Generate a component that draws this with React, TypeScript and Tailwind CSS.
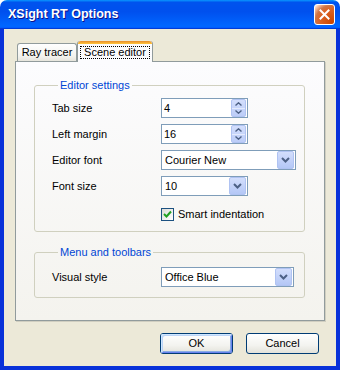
import React from 'react';

// ─── Small pieces ────────────────────────────────────────────────────────────

function SpinBox({ value }: { value: string }) {
  return (
    <div className="flex h-[20px] w-[87px] items-center border border-[#7f9db9] bg-white pl-[2px] pr-px">
      <span className="flex-1 leading-none">{value}</span>
      <div className="flex h-[18px] w-[15px] flex-col rounded-[2px] border border-[#b0c3f2] bg-[linear-gradient(#d3defc,#bccdf8)]">
        <div className="flex flex-1 items-center justify-center">
          <svg width="7" height="4" viewBox="0 0 7 4">
            <path d="M0.5 3.5 L3.5 0.8 L6.5 3.5" fill="none" stroke="#4d6185" strokeWidth="1.4" />
          </svg>
        </div>
        <div className="h-px bg-[#e4ebfd]" />
        <div className="flex flex-1 items-center justify-center">
          <svg width="7" height="4" viewBox="0 0 7 4">
            <path d="M0.5 0.5 L3.5 3.2 L6.5 0.5" fill="none" stroke="#4d6185" strokeWidth="1.4" />
          </svg>
        </div>
      </div>
    </div>
  );
}

function ComboBox({ value, width }: { value: string; width: string }) {
  return (
    <div className={`flex h-[20px] items-center border border-[#7f9db9] bg-white pl-[3px] pr-px ${width}`}>
      <span className="flex-1 leading-none">{value}</span>
      <div className="flex h-[18px] w-[17px] items-center justify-center rounded-[2px] border border-[#b0c3f2] bg-[linear-gradient(#d3defc,#b4c7f6)]">
        <svg width="9" height="6" viewBox="0 0 9 6">
          <path d="M1 1 L4.5 4.5 L8 1" fill="none" stroke="#4d6185" strokeWidth="2" />
        </svg>
      </div>
    </div>
  );
}

function Row({ label, children }: { label: string; children: React.ReactNode }) {
  return (
    <div className="flex h-[20px] items-center">
      <span className="w-[109px]">{label}</span>
      {children}
    </div>
  );
}

function GroupBox({ title, children, className = '' }: { title: string; children: React.ReactNode; className?: string }) {
  return (
    <fieldset className={`rounded-[3px] border border-[#d0d0bf] pl-[17px] ${className}`}>
      <legend className="ml-[6px] px-[2px] text-[11px] leading-[13px] text-[#0046d5]">{title}</legend>
      {children}
    </fieldset>
  );
}

function XpButton({ label, isDefault = false }: { label: string; isDefault?: boolean }) {
  return (
    <button
      type="button"
      className="flex h-[21px] w-[73px] items-center justify-center rounded-[3px] border border-[#003c74] bg-[linear-gradient(#ffffff,#f3f3ef_60%,#e3e2da)] p-0"
    >
      <span
        className={`flex h-full w-full items-center justify-center rounded-[2px] ${
          isDefault ? 'shadow-[inset_1px_1px_0_#cee7ff,inset_-1px_-1px_0_#6982ee,inset_2px_2px_0_#bcd4f6,inset_-2px_-2px_0_#89ade4]' : ''
        }`}
      >
        {label}
      </span>
    </button>
  );
}

// ─── Dialog ──────────────────────────────────────────────────────────────────

export default function App() {
  return (
    <div className="h-[370px] w-[340px] bg-white font-['Liberation_Sans',Arial,sans-serif] text-[11px] text-black">
      <div className="flex h-full w-full flex-col overflow-hidden rounded-t-[7px]">
        {/* Title bar */}
        <div className="flex h-[29px] shrink-0 items-center bg-[linear-gradient(180deg,#0997ff,#0053ee_8%,#0050ee_40%,#0066ff_88%,#0066ff_93%,#005bff_95%,#003dd7_96%,#003dd7)] pl-[8px] pr-[5px]">
          <span className="flex-1 text-[12.5px] font-bold text-white [text-shadow:1px_1px_0_#0f1089]">XSight RT Options</span>
          <div className="flex h-[21px] w-[21px] items-center justify-center rounded-[3px] border border-white bg-[radial-gradient(circle_at_90%_90%,#cc4600_0%,#dc6527_55%,#cd7546_70%,#ffccb2_90%,#fff_100%)]">
            <svg width="11" height="11" viewBox="0 0 11 11">
              <path d="M1.5 1.5 L9.5 9.5 M9.5 1.5 L1.5 9.5" stroke="#fff" strokeWidth="2" strokeLinecap="square" />
            </svg>
          </div>
        </div>

        {/* Client area */}
        <div className="flex flex-1 flex-col border-x-4 border-b-4 border-[#0831d9] bg-[#ece9d8] pl-[11px] pr-[11px] pt-[12px]">
          {/* Tabs */}
          <div className="flex h-[20px] items-end pl-[2px]">
            <div className="flex h-[18px] w-[60px] items-center justify-center rounded-t-[3px] border border-b-0 border-[#919b9c] bg-[linear-gradient(#ffffff,#f3f3ef_70%,#e6e5dc)]">
              Ray tracer
            </div>
            <div className="relative z-10 -mb-px flex h-[21px] w-[76px] flex-col rounded-t-[3px] border-x border-[#919b9c] bg-[#fcfcfe]">
              <div className="h-[3px] rounded-t-[3px] bg-[linear-gradient(#e68b2c,#ffc73c)]" />
              <div className="flex flex-1 items-start justify-center pt-[2px]">
                <span className="border border-dotted border-black px-[3px] leading-[11px]">Scene editor</span>
              </div>
            </div>
          </div>

          {/* Tab page */}
          <div className="flex h-[260px] flex-col border border-[#919b9c] bg-[linear-gradient(#fcfcfe,#f4f3ee)] pl-[18px] pr-[19px] pt-[17px] shadow-[1px_1px_0_#d0cec0]">
            <GroupBox title="Editor settings" className="pb-[7px] pt-[6px]">
              <div className="flex flex-col gap-[6px]">
                <Row label="Tab size">
                  <SpinBox value="4" />
                </Row>
                <Row label="Left margin">
                  <SpinBox value="16" />
                </Row>
                <Row label="Editor font">
                  <ComboBox value="Courier New" width="w-[135px]" />
                </Row>
                <Row label="Font size">
                  <ComboBox value="10" width="w-[87px]" />
                </Row>
                <div className="mt-[2px] flex h-[20px] items-center pl-[109px]">
                  <div className="flex h-[13px] w-[13px] items-center justify-center border border-[#1c5180] bg-[linear-gradient(135deg,#dcdcd7,#ffffff)]">
                    <svg width="9" height="9" viewBox="0 0 9 9">
                      <path d="M1 4 L3.5 6.5 L8 1.5" fill="none" stroke="#21a121" strokeWidth="2" />
                    </svg>
                  </div>
                  <span className="ml-[4px]">Smart indentation</span>
                </div>
              </div>
            </GroupBox>

            <GroupBox title="Menu and toolbars" className="mt-[14px] pb-[10px] pt-[8px]">
              <Row label="Visual style">
                <ComboBox value="Office Blue" width="w-[133px]" />
              </Row>
            </GroupBox>
          </div>

          {/* Buttons */}
          <div className="mt-[12px] flex justify-end gap-[13px] pr-[6px]">
            <XpButton label="OK" isDefault />
            <XpButton label="Cancel" />
          </div>
        </div>
      </div>
    </div>
  );
}
